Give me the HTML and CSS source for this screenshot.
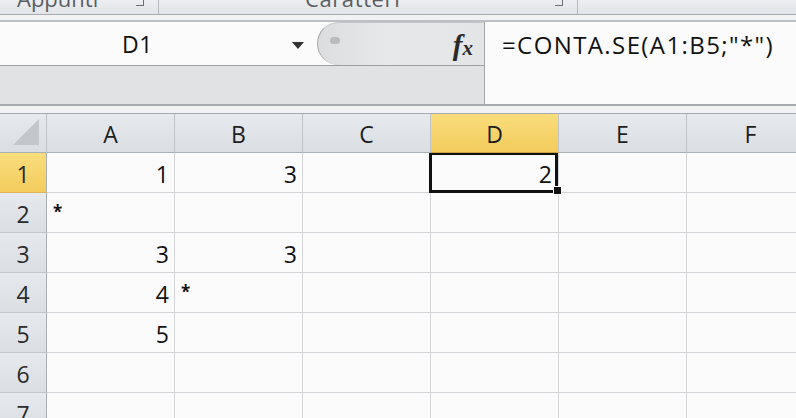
FILE: index.html
```html
<!DOCTYPE html>
<html>
<head>
<meta charset="utf-8">
<link rel="stylesheet" href="styles.css">
</head>
<body>
<div class="app">
  <div class="ribbon">
    <div class="group g1"><span class="glabel">Appunti</span><span class="launcher"></span></div>
    <div class="group g2"><span class="glabel">Caratteri</span><span class="launcher"></span></div>
    <div class="group g3"></div>
  </div>
  <div class="ribbon-gap"></div>
  <div class="fbar">
    <div class="fleft">
      <div class="ftop">
        <div class="namebox">
          <span class="nbtext">D1</span>
          <svg class="nbarrow" width="12" height="7" viewBox="0 0 12 7"><path d="M0 0H12L6 7Z" fill="#333"/></svg>
        </div>
        <div class="fxzone">
          <span class="grip"></span>
          <span class="fx"><i>f</i><i class="xx">x</i></span>
        </div>
      </div>
      <div class="fbottom"></div>
    </div>
    <div class="finput">=CONTA.SE(A1:B5;"*")</div>
  </div>
  <div class="sheet-gap"></div>
  <div class="sheet">
    <div class="hd corner"><svg width="26" height="26" viewBox="0 0 26 26"><path d="M26 0V26H0Z" fill="#c3c6cb"/></svg></div>
    <div class="hd col">A</div>
    <div class="hd col">B</div>
    <div class="hd col">C</div>
    <div class="hd col sel">D</div>
    <div class="hd col">E</div>
    <div class="hd col">F</div>

    <div class="hd row sel">1</div>
    <div class="c num">1</div><div class="c num">3</div><div class="c"></div><div class="c num active">2</div><div class="c"></div><div class="c"></div>

    <div class="hd row">2</div>
    <div class="c txt">*</div><div class="c"></div><div class="c"></div><div class="c"></div><div class="c"></div><div class="c"></div>

    <div class="hd row">3</div>
    <div class="c num">3</div><div class="c num">3</div><div class="c"></div><div class="c"></div><div class="c"></div><div class="c"></div>

    <div class="hd row">4</div>
    <div class="c num">4</div><div class="c txt">*</div><div class="c"></div><div class="c"></div><div class="c"></div><div class="c"></div>

    <div class="hd row">5</div>
    <div class="c num">5</div><div class="c"></div><div class="c"></div><div class="c"></div><div class="c"></div><div class="c"></div>

    <div class="hd row">6</div>
    <div class="c"></div><div class="c"></div><div class="c"></div><div class="c"></div><div class="c"></div><div class="c"></div>

    <div class="hd row">7</div>
    <div class="c"></div><div class="c"></div><div class="c"></div><div class="c"></div><div class="c"></div><div class="c"></div>
  </div>
</div>
</body>
</html>
```

FILE: styles.css
```css
html, body {
  margin: 0;
  padding: 0;
  background: #fafafa;
  overflow: hidden;
}
.app {
  width: 796px;
  height: 418px;
  overflow: hidden;
  font-family: "Open Sans", "Liberation Sans", sans-serif;
  color: #111;
}
.ribbon {
  display: flex;
  height: 14px;
  background: linear-gradient(#eceef1, #e1e4e8);
  border-bottom: 1px solid #a9adb3;
  overflow: hidden;
}
.group {
  position: relative;
  height: 14px;
  border-right: 1px solid #b4b8be;
  overflow: hidden;
}
.g1 { width: 158px; }
.g2 { width: 418px; }
.g3 { flex: 1; border-right: none; }
.glabel {
  display: block;
  font-size: 22px;
  line-height: 22px;
  margin-top: -13px;
  color: #5a5e64;
  white-space: nowrap;
}
.g1 .glabel { padding-left: 17px; }
.g2 .glabel { padding-left: 146px; letter-spacing: 0.6px; }
.launcher {
  position: absolute;
  right: 14px;
  top: 0;
  width: 7px;
  height: 5px;
  border-right: 1px solid #6b6f75;
  border-bottom: 1px solid #6b6f75;
}
.ribbon-gap {
  height: 5px;
  background: #f1f2f4;
  border-bottom: 2px solid #bcc0c5;
}
.fbar {
  display: flex;
  height: 82px;
  border-bottom: 2px solid #a7abb0;
}
.fleft {
  width: 484px;
  display: flex;
  flex-direction: column;
  background: #e2e3e5;
}
.ftop {
  display: flex;
  height: 43px;
  background: #fbfbfb;
  border-bottom: 1px solid #9c9fa3;
}
.namebox {
  width: 317px;
  position: relative;
  display: flex;
  align-items: center;
}
.nbtext {
  font-size: 23px;
  margin-left: 122px;
  line-height: 43px;
  padding-top: 2px;
  letter-spacing: 0.5px;
}
.nbarrow {
  position: absolute;
  left: 292px;
  top: 20px;
}
.fxzone {
  flex: 1;
  position: relative;
  background: linear-gradient(90deg, #dcdddf, #e7e8ea 40%, #e4e5e7);
  border-left: 1px solid #a4a7ab;
  border-top: 1px solid #c4c6c9;
  border-radius: 22px 0 0 22px;
  display: flex;
  align-items: center;
  justify-content: flex-end;
  padding-right: 11px;
}
.grip {
  position: absolute;
  left: 12px;
  top: 14px;
  width: 10px;
  height: 7px;
  border-radius: 4px;
  background: #b9bbbf;
  filter: blur(0.6px);
}
.fx {
  font-family: "Liberation Serif", "DejaVu Serif", serif;
  font-weight: bold;
  color: #2a2a2a;
  margin-top: 2px;
}
.fx i { font-size: 29px; }
.fx .xx { font-size: 21px; margin-left: 0; }
.fbottom {
  flex: 1;
  background: #e1e2e4;
}
.finput {
  flex: 1;
  background: #fbfbfb;
  border-left: 1px solid #a3a6aa;
  font-size: 24px;
  line-height: 46px;
  padding-left: 17px;
  letter-spacing: 1.4px;
  white-space: nowrap;
}
.sheet-gap {
  height: 7px;
  background: #f1f2f4;
  border-bottom: 1px solid #a9adb3;
}
.sheet {
  display: grid;
  grid-template-columns: 47px repeat(6, 128px);
  grid-template-rows: 39px repeat(7, 40px);
  width: 815px;
}
.hd {
  box-sizing: border-box;
  background: linear-gradient(#e6e9ed, #dadee3);
  border-right: 1px solid #bfc3c9;
  border-bottom: 1px solid #aab0b7;
  display: flex;
  align-items: center;
  justify-content: center;
  font-size: 23px;
  color: #1d1d1d;
}
.hd.col { padding-top: 1px; }
.hd.row {
  border-right: 1px solid #a9aeb5;
  border-bottom: 1px solid #c3c7cc;
  color: #2a2a2a;
  padding-top: 3px;
}
.corner {
  align-items: flex-end;
  justify-content: flex-end;
  padding: 0 7px 7px 0;
}
.hd.sel {
  background: linear-gradient(#f9dd7c, #f3cc5c);
  border-bottom: 1px solid #c8a43e;
}
.hd.row.sel {
  border-bottom: 1px solid #dfb457;
}
.c {
  box-sizing: border-box;
  background: #fbfbfb;
  border-right: 1px solid #d2d4d7;
  border-bottom: 1px solid #d2d4d7;
  font-size: 23px;
  display: flex;
  align-items: flex-end;
  line-height: 34px;
  padding-bottom: 1px;
}
.num {
  justify-content: flex-end;
  padding-right: 5px;
}
.txt {
  justify-content: flex-start;
  padding-left: 6px;
  font-size: 17px;
  font-weight: bold;
  align-items: flex-start;
  line-height: 17px;
  padding-top: 10px;
}
.active {
  position: relative;
  padding-right: 6px;
}
.active::after {
  content: "";
  position: absolute;
  left: -2px;
  top: 0;
  right: 0;
  bottom: -1px;
  border: 3px solid #111;
  border-top-width: 2px;
}
.active::before {
  content: "";
  position: absolute;
  right: -4px;
  bottom: -3px;
  width: 7px;
  height: 7px;
  background: #111;
  border: 1px solid #fbfbfb;
  z-index: 2;
}
```
